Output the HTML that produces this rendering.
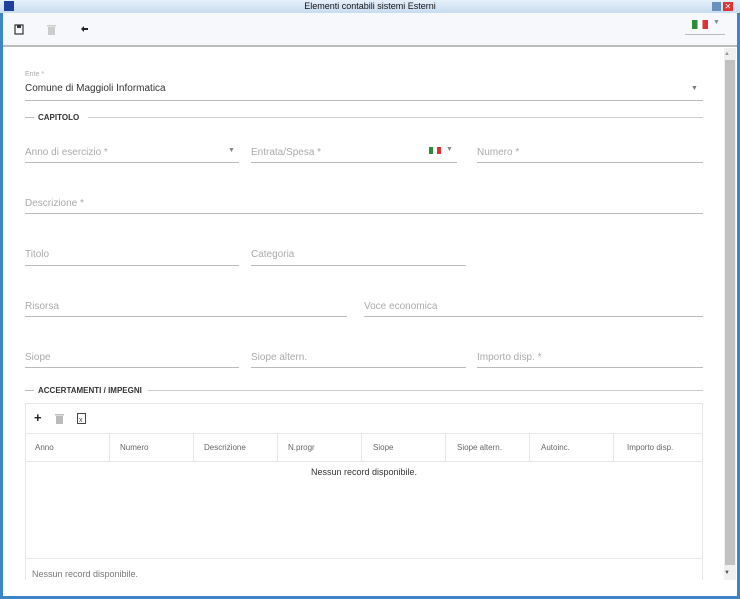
<!DOCTYPE html><html><head><style>
*{box-sizing:border-box;margin:0;padding:0}
body{width:740px;height:599px;overflow:hidden;background:#3d85c6;font-family:"Liberation Sans",sans-serif;position:relative}
.a{position:absolute}
.title{left:0;top:0;width:740px;height:13px;background:linear-gradient(#e6f0fa,#c7dcf1);font-size:9px;text-align:center;line-height:13px;color:#111}
.win{left:3px;top:13px;width:734px;height:583px;background:#fff}
.tb{left:3px;top:13px;width:734px;height:34px;background:#f7f8fc;border-bottom:2px solid #bbb}
.lbl{font-size:10px;color:#aaa}
.ln{height:1px;background:#bbb}
.sec{font-size:8px;font-weight:bold;color:#333}
.th{font-size:8px;color:#666;top:443px}
</style></head><body>
<div class="a title">Elementi contabili sistemi Esterni</div>
<div class="a" style="left:4px;top:1px;width:10px;height:10px;background:#1d3f9e"></div>
<div class="a" style="left:712px;top:2px;width:9px;height:9px;background:#6a8fb8"></div>
<div class="a" style="left:723px;top:2px;width:10px;height:9px;background:#d33;color:#fff;font-size:8px;line-height:9px;text-align:center">✕</div>
<div class="a win"></div>
<div class="a tb"></div>
<svg class="a" style="left:14px;top:24px" width="10" height="11"><rect x="1" y="1" width="8" height="9" fill="none" stroke="#333" stroke-width="1.2"/><rect x="3" y="1" width="4" height="3" fill="#333"/></svg>
<svg class="a" style="left:47px;top:24px" width="9" height="11"><rect x="1" y="3" width="7" height="8" fill="#ccc"/><rect x="0" y="1" width="9" height="1.5" fill="#ccc"/></svg>
<svg class="a" style="left:81px;top:26px" width="7" height="6"><path d="M0 3 L3 0 L3 2 L7 2 L7 4 L3 4 L3 6 Z" fill="#222"/></svg>
<div class="a" style="left:692px;top:20px;width:16px;height:9px;background:linear-gradient(90deg,#2a8f3a 33%,#fff 33% 66%,#d33 66%)"></div>
<div class="a" style="left:713px;top:19px;font-size:7px;color:#888">▼</div>
<div class="a ln" style="left:685px;top:34px;width:40px"></div>
<div class="a" style="left:724px;top:48px;width:12px;height:532px;background:#f0f0f0"></div>
<div class="a" style="left:725px;top:60px;width:10px;height:505px;background:#c1c1c1"></div>
<div class="a lbl" style="left:25px;top:71px;font-size:7px">Ente *</div>
<div class="a" style="left:25px;top:83px;font-size:10px;color:#333">Comune di Maggioli Informatica</div>
<div class="a" style="left:691px;top:85px;font-size:7px;color:#777">▼</div>
<div class="a ln" style="left:25px;top:100px;width:678px"></div>
<div class="a ln" style="left:25px;top:117px;width:9px"></div>
<div class="a sec" style="left:38px;top:113px">CAPITOLO</div>
<div class="a ln" style="left:88px;top:117px;width:615px;background:#ccc"></div>

<div class="a lbl" style="left:25px;top:147px">Anno di esercizio *</div><div class="a" style="left:228px;top:147px;font-size:7px;color:#888">▼</div><div class="a ln" style="left:25px;top:162px;width:214px"></div>
<div class="a lbl" style="left:251px;top:147px">Entrata/Spesa *</div><div class="a" style="left:429px;top:147px;width:12px;height:7px;background:linear-gradient(90deg,#2a8f3a 33%,#fff 33% 66%,#d33 66%)"></div><div class="a" style="left:446px;top:146px;font-size:7px;color:#888">▼</div><div class="a ln" style="left:251px;top:162px;width:206px"></div>
<div class="a lbl" style="left:477px;top:147px">Numero *</div><div class="a ln" style="left:477px;top:162px;width:226px"></div>
<div class="a lbl" style="left:25px;top:198px">Descrizione *</div><div class="a ln" style="left:25px;top:213px;width:678px"></div>
<div class="a lbl" style="left:25px;top:249px">Titolo</div><div class="a ln" style="left:25px;top:265px;width:214px"></div>
<div class="a lbl" style="left:251px;top:249px">Categoria</div><div class="a ln" style="left:251px;top:265px;width:215px"></div>
<div class="a lbl" style="left:25px;top:301px">Risorsa</div><div class="a ln" style="left:25px;top:316px;width:322px"></div>
<div class="a lbl" style="left:364px;top:301px">Voce economica</div><div class="a ln" style="left:364px;top:316px;width:339px"></div>
<div class="a lbl" style="left:25px;top:352px">Siope</div><div class="a ln" style="left:25px;top:367px;width:214px"></div>
<div class="a lbl" style="left:251px;top:352px">Siope altern.</div><div class="a ln" style="left:251px;top:367px;width:215px"></div>
<div class="a lbl" style="left:477px;top:352px">Importo disp. *</div><div class="a ln" style="left:477px;top:367px;width:226px"></div>

<div class="a ln" style="left:25px;top:390px;width:9px"></div>
<div class="a sec" style="left:38px;top:386px">ACCERTAMENTI / IMPEGNI</div>
<div class="a ln" style="left:148px;top:390px;width:555px;background:#ccc"></div>
<div class="a" style="left:25px;top:403px;width:678px;height:180px;border:1px solid #e6e6e6"></div>
<div class="a" style="left:34px;top:410px;font-size:13px;font-weight:bold;color:#222">+</div>
<svg class="a" style="left:55px;top:413px" width="9" height="11"><rect x="1" y="3" width="7" height="8" fill="#bbb"/><rect x="0" y="1" width="9" height="1.5" fill="#bbb"/></svg>
<svg class="a" style="left:77px;top:413px" width="9" height="11"><rect x=".5" y=".5" width="8" height="10" fill="none" stroke="#444"/><text x="2" y="9" font-size="7" fill="#444" font-family="Liberation Sans">x</text></svg>
<div class="a" style="left:25px;top:433px;width:678px;height:29px;border-top:1px solid #e6e6e6;border-bottom:1px solid #e6e6e6"></div>
<div class="a th" style="left:35px">Anno</div>
<div class="a th" style="left:120px">Numero</div>
<div class="a th" style="left:204px">Descrizione</div>
<div class="a th" style="left:288px">N.progr</div>
<div class="a th" style="left:373px">Siope</div>
<div class="a th" style="left:457px">Siope altern.</div>
<div class="a th" style="left:541px">Autoinc.</div>
<div class="a th" style="left:627px">Importo disp.</div>
<div class="a" style="left:109px;top:433px;width:1px;height:29px;background:#e6e6e6;box-shadow:84px 0 #e6e6e6,168px 0 #e6e6e6,252px 0 #e6e6e6,336px 0 #e6e6e6,420px 0 #e6e6e6,504px 0 #e6e6e6"></div>
<div class="a" style="left:25px;top:467px;width:678px;text-align:center;font-size:9px;color:#333">Nessun record disponibile.</div>
<div class="a ln" style="left:25px;top:558px;width:678px;background:#e6e6e6"></div>
<div class="a" style="left:32px;top:569px;font-size:9px;color:#777">Nessun record disponibile.</div>
<div class="a" style="left:3px;top:580px;width:734px;height:16px;background:#fff"></div>
<div class="a" style="left:724px;top:570px;font-size:6px;color:#555">▼</div>
<div class="a" style="left:724px;top:51px;font-size:6px;color:#999">▲</div>
</body></html>
